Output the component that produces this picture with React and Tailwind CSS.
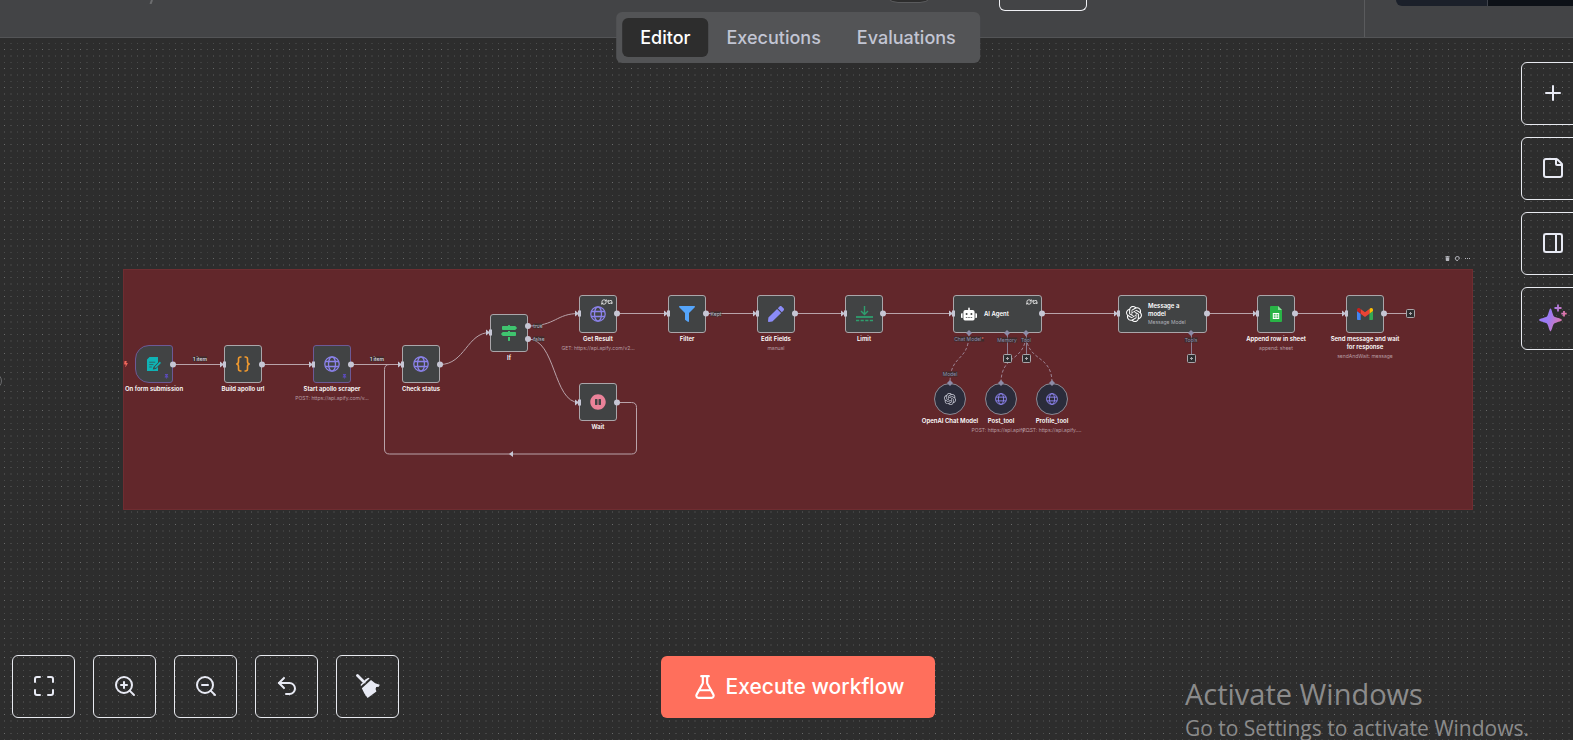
import React from 'react';
import {
  FlaskConical,
  Maximize,
  PanelRight,
  Plus,
  RefreshCw,
  Repeat2,
  StickyNote,
  Undo2,
  ZoomIn,
  ZoomOut
} from 'lucide-react';
import { FaBolt, FaFilter, FaMapSigns, FaPauseCircle, FaPen, FaRobot, FaThumbtack, FaTrash } from 'react-icons/fa';
import { SiOpenai } from 'react-icons/si';

const Globe = ({ className = 'w-4 h-4' }) => (
  <svg viewBox="0 0 16 16" className={`text-[#8b82ea] ${className}`} fill="none" stroke="currentColor" strokeWidth="1.3">
    <circle cx="8" cy="8" r="7.2" />
    <ellipse cx="8" cy="8" rx="3.5" ry="7.2" />
    <path d="M1.2 5.5h13.6M1.2 10.5h13.6" />
  </svg>
);

const FormIcon = () => (
  <svg viewBox="0 0 16 16" className="w-4 h-4">
    <path d="M3.5 1H12v5.5L7.5 11l-.7 2.6 3-.7L12 10.8V15H1V3.5z" fill="#0fb3b5" />
    <path d="M3.2 6.2h6M3.2 8.6h4.2M3.2 11h2.6" stroke="#414344" strokeWidth=".7" />
    <path d="M8.2 12.4l.6-2 5-5 1.5 1.5-5 5z" fill="#0fb3b5" stroke="#414344" strokeWidth=".5" />
  </svg>
);

const CodeIcon = () => (
  <svg viewBox="0 0 16 16" className="w-4 h-4" fill="none" stroke="#f29a2e" strokeWidth="1.6">
    <path d="M6.500 1H5.600C4.100 1 3.500 1.900 3.500 3v2.600C3.500 7 2.700 8 1.200 8c1.500 0 2.300 1 2.300 2.400V13c0 1.100.6 2 2.100 2h.9" />
    <path d="M9.500 1h.9c1.500 0 2.100.9 2.100 2v2.600C12.500 7 13.300 8 14.800 8c-1.500 0-2.300 1-2.300 2.400V13c0 1.100-.6 2-2.100 2h-.9" />
  </svg>
);

const LimitIcon = () => (
  <svg viewBox="0 0 17 16" className="w-[17px] h-4" fill="none" stroke="#2f9e6e">
    <path d="M8.500 0v8M5 5l3.500 3.500L12 5" strokeWidth="1.400" />
    <path d="M0 11h17" strokeWidth="1.800" />
    <path d="M0 14.500h17" strokeWidth="1.500" strokeDasharray="3.200 1.400" />
  </svg>
);

const SheetIcon = () => (
  <svg viewBox="0 0 12 16" className="w-3 h-4">
    <path d="M1 0h7l4 4v11a1 1 0 0 1-1 1H1a1 1 0 0 1-1-1V1a1 1 0 0 1 1-1z" fill="#28b446" />
    <path d="M8 0l4 4H8z" fill="#8fdb9d" />
    <path d="M2.800 7h6.400v6H2.800z" fill="#fff" />
    <path d="M3.800 8.200h1.800v1.300H3.800zM6.500 8.200h1.800v1.300H6.500zM3.800 10.500h1.800v1.300H3.800zM6.500 10.500h1.800v1.300H6.500z" fill="#28b446" />
  </svg>
);

const GmailIcon = () => (
  <svg viewBox="52 42 88 66" className="w-4 h-3">
    <path fill="#4285f4" d="M58 108h14V74L52 59v43c0 3.320 2.690 6 6 6" />
    <path fill="#34a853" d="M120 108h14c3.320 0 6-2.690 6-6V59l-20 15" />
    <path fill="#fbbc04" d="M120 48v26l20-15v-8c0-7.420-8.470-11.650-14.400-7.200" />
    <path fill="#ea4335" d="M72 74V48l24 18 24-18v26L96 92" />
    <path fill="#c5221f" d="M52 51v8l20 15V48l-5.600-4.200c-5.940-4.450-14.400-.22-14.400 7.200" />
  </svg>
);

const BroomIcon = () => (
  <svg viewBox="0 0 24 24" className="w-6 h-6" fill="#e8eaf4">
    <path d="M1.500 1.500l6.500 6.500" stroke="#e8eaf4" strokeWidth="2.800" strokeLinecap="round" />
    <path d="M4.800 12.300v-2L7 8.500l2.300-3 3-1.700 1.300.8z" />
    <path d="M5.800 14.200L15 6l4.200 3.200 4.600 1.600-1 2-2.600.2-.6 2 .8 2.400L11.600 24 8.400 19.500z" />
  </svg>
);

const Sparkles = () => (
  <svg viewBox="0 0 28 28" className="w-7 h-7">
    <defs>
      <linearGradient id="spark" x1="0" y1="0" x2="28" y2="10" gradientUnits="userSpaceOnUse">
        <stop offset=".45" stopColor="#9b7bf5" />
        <stop offset="1" stopColor="#e8769f" />
      </linearGradient>
    </defs>
    <path d="M11.500 4.500c1.200 0 2.200 7 3.600 8.100s7.900 2 7.900 3.400-6.500 2.300-7.900 3.600-2.400 7.900-3.600 7.900-2.200-6.500-3.600-7.900S0 17.400 0 16s6.500-2.200 7.900-3.400 2.400-8.100 3.600-8.100z" fill="url(#spark)" />
    <path d="M18.100 .5h1.800v2.600h2.600v1.800h-2.600v2.600h-1.800V4.900h-2.600V3.100h2.600zM24.100 7h1.800v1.800h1.800v1.800h-1.800v1.900h-1.800v-1.900h-1.800V8.800h1.800z" fill="url(#spark)" />
  </svg>
);

// positions are canvas coordinates
const nodes = [
  { x: 135, y: 307, label: 'On form submission', icon: <FormIcon />, pinned: true, trigger: true },
  { x: 224, y: 307, label: 'Build apollo url', icon: <CodeIcon /> },
  { x: 313, y: 307, label: 'Start apollo scraper', sub: 'POST: https://api.apify.com/v...', icon: <Globe />, pinned: true },
  { x: 402, y: 307, label: 'Check status', icon: <Globe /> },
  { x: 490, y: 276, label: 'If', icon: <FaMapSigns className="w-4 h-4 text-[#3fc46f]" /> },
  { x: 579, y: 257, label: 'Get Result', sub: 'GET: https://api.apify.com/v2...', icon: <Globe />, retry: true },
  { x: 579, y: 345, label: 'Wait', icon: <FaPauseCircle className="w-4 h-4 text-[#ea8299]" /> },
  { x: 668, y: 257, label: 'Filter', icon: <FaFilter className="w-4 h-4 text-[#55a5fb]" /> },
  { x: 757, y: 257, label: 'Edit Fields', sub: 'manual', icon: <FaPen className="w-4 h-4 text-[#8b8cf8]" /> },
  { x: 845, y: 257, label: 'Limit', icon: <LimitIcon /> },
  { x: 1257, y: 257, label: 'Append row in sheet', sub: 'append: sheet', icon: <SheetIcon /> },
  { x: 1346, y: 257, label: 'Send message and wait for response', sub: 'sendAndWait: message', icon: <GmailIcon /> },
];

const tools = [
  { x: 934, label: 'OpenAI Chat Model', icon: <SiOpenai className="w-3 h-3 text-[#c3c4d0]" /> },
  { x: 985, label: 'Post_tool', sub: 'POST: https://api.apify....', icon: <Globe className="w-3 h-3" /> },
  { x: 1036, label: 'Profile_tool', sub: 'POST: https://api.apify....', icon: <Globe className="w-3 h-3" /> },
];

const edges = [
  'M173 326.500H224',
  'M262 326.500H313',
  'M351 326.500H402',
  'M440 326.500C465 326.500 467 294.500 490 294.500',
  'M528 288C556 288 556 275.500 579 275.500',
  'M528 301C556 301 553 364.500 579 364.500',
  'M617 364.500h14.500q5 0 5 5v41.500q0 5 -5 5H389.500q-5 0 -5 -5V331.500q0 -5 5 -5H402',
  'M617 275.500H668',
  'M706 275.500H757',
  'M795 275.500H845',
  'M883 275.500H953',
  'M1042 275.500H1118',
  'M1207 275.500H1257',
  'M1295 275.500H1346',
  'M1384 275.500H1406',
];

const outputs = [
  [173, 326.5], [262, 326.5], [351, 326.5], [440, 326.5], [528, 288], [528, 301], [617, 275.5], [617, 364.5],
  [706, 275.5], [795, 275.5], [883, 275.5], [1042, 275.5], [1207, 275.5], [1295, 275.5], [1384, 275.5],
];

const inputs = [
  [224, 326.5], [313, 326.5], [402, 326.5], [490, 294.5], [579, 275.5], [579, 364.5], [668, 275.5],
  [757, 275.5], [845, 275.5], [953, 275.5], [1118, 275.5], [1257, 275.5], [1346, 275.5],
];

const diamonds = [[969, 295], [1007, 295], [1026, 295], [1191, 295], [950, 345], [1001, 345], [1052, 345]];

const plusBoxes = [[1410, 275], [1007, 320], [1026, 320], [1191, 320]];

const edgeLabels = [
  { text: '1 item', x: 200, y: 321, color: 'text-[#d8d5df] font-semibold' },
  { text: '1 item', x: 377, y: 321, color: 'text-[#d8d5df] font-semibold' },
  { text: 'true', x: 538, y: 288, color: 'text-[#b9b9c6]' },
  { text: 'false', x: 539, y: 301, color: 'text-[#b9b9c6]' },
  { text: 'Kept', x: 716, y: 276, color: 'text-[#b9b9c6]' },
  { text: 'Chat Model', x: 969, y: 301, color: 'text-[#8f8fae]', required: true },
  { text: 'Memory', x: 1007, y: 302, color: 'text-[#8f8fae]' },
  { text: 'Tool', x: 1026, y: 302, color: 'text-[#8f8fae]' },
  { text: 'Model', x: 950, y: 336, color: 'text-[#8f8fae]' },
  { text: 'Tools', x: 1191, y: 302, color: 'text-[#8f8fae]' },
];

const Dots = () => (
  <svg className="absolute inset-0 w-full h-full">
    <defs>
      <pattern id="dots" width="19" height="19" patternUnits="userSpaceOnUse">
        <g fill="#6a6b6b">
          <rect x="4" y="11" width="1" height="1" />
          <g opacity=".5">
            <rect x="10" y="11" width="2" height="1" opacity=".8" />
            <rect x="17" y="11" width="1" height="1" />
            <rect x="4" y="5" width="1" height="1" />
            <rect x="4" y="17" width="1" height="2" opacity=".8" />
          </g>
          <g opacity=".3">
            <rect x="10" y="5" width="2" height="1" />
            <rect x="17" y="5" width="1" height="1" />
            <rect x="10" y="17" width="2" height="2" opacity=".7" />
            <rect x="17" y="17" width="1" height="2" />
          </g>
        </g>
      </pattern>
    </defs>
    <rect width="100%" height="100%" fill="url(#dots)" />
  </svg>
);

const NodeText = ({ label, sub }) => (
  <div className="absolute top-full left-1/2 -translate-x-1/2 mt-[3px] w-[76px] flex flex-col items-center text-center">
    <p className="text-[6px] leading-[8px] font-semibold text-white">{label}</p>
    {sub && <p className="mt-px text-[5px] leading-[8px] text-[#b79da3] whitespace-nowrap">{sub}</p>}
  </div>
);

const RetryMarks = () => (
  <div className="absolute top-[3px] right-[3px] flex text-white">
    <RefreshCw className="w-[6px] h-[6px]" strokeWidth={3} />
    <Repeat2 className="w-[6px] h-[6px]" strokeWidth={3} />
  </div>
);

const Workflow = () => (
  <>
    <div className="absolute left-[123px] top-[231px] w-[1350px] h-[241px] bg-[#62272b] border border-[#6e2d31]"></div>
    <div className="absolute left-[1445px] top-[218px] flex items-center gap-[5px] text-[#b5b6bd]">
      <FaTrash className="w-[5px] h-[5px]" />
      <svg viewBox="0 0 5 5" className="w-[5px] h-[5px]" fill="none" stroke="currentColor">
        <path d="M3 4.400A2 2 0 1 1 4.400 2.500q0 1-1.200.6" />
      </svg>
      <svg viewBox="0 0 5 5" className="w-[5px] h-[5px]" fill="currentColor">
        <path d="M0 2h1v1H0zM2 2h1v1H2zM4 2h1v1H4z" />
      </svg>
    </div>
    <FaBolt className="absolute left-[123px] top-[323px] w-[6px] h-[6px] text-[#f0685c]" />

    {nodes.map((node) => (
      <div
        key={node.label}
        className={`absolute w-[38px] h-[38px] flex items-center justify-center bg-[#414344] border ${node.pinned ? 'border-[#6c5a96]' : 'border-[#aaa6aa]'} ${node.trigger ? 'rounded-[3px] rounded-l-[14px]' : 'rounded-[3px]'}`}
        style={{ left: node.x, top: node.y }}
      >
        {node.icon}
        {node.pinned && <FaThumbtack className="absolute right-[3px] bottom-[3px] w-[5px] h-[5px] text-[#5a4bb5]" />}
        {node.retry && <RetryMarks />}
        <NodeText label={node.label} sub={node.sub} />
      </div>
    ))}

    <div className="absolute left-[953px] top-[257px] w-[89px] h-[38px] px-[7px] flex items-center gap-[7px] rounded-[3px] bg-[#414344] border border-[#aaa6aa]">
      <FaRobot className="w-4 h-4 text-white" />
      <p className="text-[6px] leading-[8px] font-semibold text-white">AI Agent</p>
      <RetryMarks />
    </div>
    <div className="absolute left-[1118px] top-[257px] w-[89px] h-[38px] px-[7px] flex items-center gap-[6px] rounded-[3px] bg-[#414344] border border-[#aaa6aa]">
      <SiOpenai className="w-4 h-4 shrink-0 text-white" />
      <div className="w-10">
        <p className="text-[6px] leading-[8px] font-semibold text-white">Message a model</p>
        <p className="text-[5px] leading-[8px] text-[#b0b1b8] whitespace-nowrap">Message Model</p>
      </div>
    </div>

    {tools.map((tool) => (
      <div
        key={tool.label}
        className="absolute top-[345px] w-8 h-8 flex items-center justify-center rounded-full bg-[#2b2c3b] border border-[#8d8a94]"
        style={{ left: tool.x }}
      >
        {tool.icon}
        <NodeText label={tool.label} sub={tool.sub} />
      </div>
    ))}

    <svg className="absolute left-0 top-0 w-[1573px] h-[480px] pointer-events-none" fill="none">
      {edges.map((d) => (
        <path key={d} d={d} stroke="#b9a3aa" />
      ))}
      <g stroke="#9c8494" strokeDasharray="3 2">
        <path d="M969 295C969 325 950 315 950 345" />
        <path d="M1026 295C1026 325 1001 315 1001 345" />
        <path d="M1026 295C1026 325 1052 315 1052 345" />
      </g>
      <path d="M1007.500 295v22M1026.500 295v22M1191.500 295v22" stroke="#8b7c90" />
      <path d="M509 416l4-3v6z" fill="#c6c6d4" />
      {inputs.map(([x, y]) => (
        <g key={`${x}-${y}`} fill="#c6c6d4">
          <rect x={x - 1} y={y - 3} width="3" height="6" />
          <path d={`M${x - 4} ${y - 3}l4 3l-4 3z`} />
        </g>
      ))}
      {outputs.map(([x, y]) => (
        <circle key={`${x}-${y}`} cx={x} cy={y} r="3" fill="#c6c6d4" />
      ))}
      {diamonds.map(([x, y]) => (
        <path key={`${x}-${y}`} d={`M${x} ${y - 3}l3 3l-3 3l-3 -3z`} fill="#8d8ca8" />
      ))}
      {plusBoxes.map(([x, y]) => (
        <g key={`${x}-${y}`}>
          <rect x={x - 3.5} y={y - 3.5} width="8" height="8" rx="1" fill="#2e2e30" stroke="#aaa6aa" />
          <path d={`M${x - 1} ${y + 0.5}h3M${x + 0.5} ${y - 1}v3`} stroke="#aaa6aa" />
        </g>
      ))}
    </svg>

    {edgeLabels.map((label) => (
      <span
        key={`${label.text}-${label.x}`}
        className={`absolute -translate-x-1/2 -translate-y-1/2 bg-[#2d2d2e]/70 text-[5px] leading-[5px] whitespace-nowrap ${label.color}`}
        style={{ left: label.x, top: label.y }}
      >
        {label.text}
        {label.required && <span className="text-[#f0685c]">*</span>}
      </span>
    ))}
  </>
);

const tabs = ['Editor', 'Executions', 'Evaluations'];

const sideButtons = [
  { name: 'Add node', icon: <Plus className="w-6 h-6" /> },
  { name: 'Add sticky note', icon: <StickyNote className="w-6 h-6" /> },
  { name: 'Toggle panel', icon: <PanelRight className="w-6 h-6" /> },
  { name: 'Assistant', icon: <Sparkles /> },
];

const viewButtons = [
  { name: 'Fit view', icon: <Maximize className="w-6 h-6" /> },
  { name: 'Zoom in', icon: <ZoomIn className="w-6 h-6" /> },
  { name: 'Zoom out', icon: <ZoomOut className="w-6 h-6" /> },
  { name: 'Undo', icon: <Undo2 className="w-6 h-6" /> },
  { name: 'Tidy up', icon: <BroomIcon /> },
];

const IconButton = ({ name, icon }) => (
  <button
    aria-label={name}
    className="w-[63px] h-[63px] pb-px flex items-center justify-center rounded-md border border-[#e8eaf0] text-[#e8eaf4]"
  >
    {icon}
  </button>
);

const App = () => {
  return (
    <div className="h-screen overflow-hidden bg-[#2d2d2d] font-['Inter',sans-serif]">
      {/* the editor runs a little past the right edge of the window */}
      <div className="relative flex flex-col h-full w-[calc(100%+23px)]">
        <header className="flex items-start h-[38px] shrink-0 bg-[#434446] border-b border-[#535456]">
          <svg viewBox="0 0 4 4" className="ml-[149px] w-1 h-1">
            <path d="M3 0L1.500 4" stroke="#6c6d6f" strokeWidth="2" />
          </svg>
          <button aria-label="Status" className="ml-auto -mt-[29px] w-[54px] h-8 rounded-full bg-[#2d2d2d] border border-[#5a5b5d]"></button>
          <button aria-label="Save" className="ml-[63px] w-[88px] h-[11px] rounded-b-md border border-t-0 border-[#f0f1f5]"></button>
          <div className="ml-[277px] w-[232px] h-full pl-[31px] flex items-start border-l border-[#5a5b5d]">
            <button aria-label="Star" className="w-[92px] h-[6px] rounded-bl-md bg-[#1b202a] border-r border-[#3f434b]"></button>
            <button aria-label="Star count" className="flex-1 h-[6px] bg-[#0d1117]"></button>
          </div>
        </header>

        <main className="relative flex-1 overflow-hidden">
          <Dots />
          <div className="absolute -left-[14px] top-[335px] w-4 h-4 rounded-full border border-[#6a6b6d]"></div>
          <Workflow />

          <div className="absolute right-3 top-6 flex flex-col gap-3">
            {sideButtons.map((button) => (
              <IconButton key={button.name} name={button.name} icon={button.icon} />
            ))}
          </div>

          <div className="absolute left-3 bottom-[22px] flex gap-[18px]">
            {viewButtons.map((button) => (
              <IconButton key={button.name} name={button.name} icon={button.icon} />
            ))}
          </div>

          <button className="absolute left-1/2 -translate-x-1/2 bottom-[22px] h-[62px] w-[274px] flex items-center justify-center gap-2 rounded-md bg-[#ff6f5c] text-white text-[21px] font-medium whitespace-nowrap">
            <FlaskConical className="w-[26px] h-[26px]" strokeWidth={2} />
            Execute workflow
          </button>

          <div className="absolute right-[67px] bottom-0 font-['Open_Sans','Noto_Sans',sans-serif] text-[#8b8b8b] whitespace-nowrap">
            <p className="text-[29px] leading-[36px]">Activate Windows</p>
            <p className="h-7 text-[21px] leading-[32px]">Go to Settings to activate Windows.</p>
          </div>
        </main>

        <nav className="absolute left-1/2 -translate-x-1/2 top-3 flex p-[6px] rounded-md bg-[#535456]">
          {tabs.map((tab) => (
            <button
              key={tab}
              className={`h-[39px] px-[18px] rounded-md text-[18px] font-medium ${tab === 'Editor' ? 'bg-[#2d2d2d] text-white' : 'text-[#c2c5d3]'}`}
            >
              {tab}
            </button>
          ))}
        </nav>
      </div>
    </div>
  );
};

export default App;
